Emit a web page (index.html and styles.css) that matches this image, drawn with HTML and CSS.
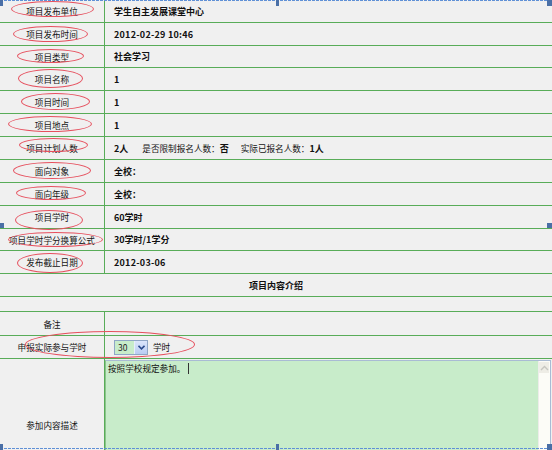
FILE: index.html
```html
<!DOCTYPE html>
<html lang="zh">
<head>
<meta charset="utf-8">
<link rel="stylesheet" href="styles.css">
</head>
<body>
<div class="page">
  <div class="sheet">
    <div class="row h23"><div class="label">项目发布单位</div><div class="value">学生自主发展课堂中心</div></div>
    <div class="row h23"><div class="label">项目发布时间</div><div class="value"><span class="num">2012-02-29 10:46</span></div></div>
    <div class="row h22"><div class="label">项目类型</div><div class="value">社会学习</div></div>
    <div class="row h23"><div class="label">项目名称</div><div class="value">1</div></div>
    <div class="row h23"><div class="label">项目时间</div><div class="value">1</div></div>
    <div class="row h23"><div class="label">项目地点</div><div class="value">1</div></div>
    <div class="row h23"><div class="label">项目计划人数</div><div class="value"><span>2人</span><span class="plain g1">是否限制报名人数：</span><span>否</span><span class="plain g2">实际已报名人数：</span><span>1人</span></div></div>
    <div class="row h23"><div class="label">面向对象</div><div class="value">全校：</div></div>
    <div class="row h23"><div class="label">面向年级</div><div class="value">全校：</div></div>
    <div class="row h23"><div class="label">项目学时</div><div class="value">60学时</div></div>
    <div class="row h22"><div class="label">项目学时学分换算公式</div><div class="value">30学时/1学分</div></div>
    <div class="row h23"><div class="label">发布截止日期</div><div class="value"><span class="num">2012-03-06</span></div></div>
    <div class="row full h23"><div class="title">项目内容介绍</div></div>
    <div class="row full h15"></div>
    <div class="row h24"><div class="label">备注</div><div class="value"></div></div>
    <div class="row h23"><div class="label">申报实际参与学时</div>
      <div class="value plain">
        <div class="select"><div class="sel-text">30</div><div class="sel-btn"><svg width="7" height="5" viewBox="0 0 7 5"><path d="M0.5 0.8 L3.5 3.8 L6.5 0.8" fill="none" stroke="#2b4b8c" stroke-width="1.6"/></svg></div></div>
        <span class="unit">学时</span>
      </div>
    </div>
    <div class="row desc"><div class="label">参加内容描述</div>
      <div class="value plain top">
        <div class="textarea">
          <div class="ta-text">按照学校规定参加。<span class="caret"></span></div>
          <div class="scroll"><div class="scroll-btn"><svg width="9" height="6" viewBox="0 0 9 6"><path d="M1 5 L4.5 1.5 L8 5" fill="none" stroke="#c6c6c0" stroke-width="1.4"/></svg></div></div>
        </div>
      </div>
    </div>
  </div>

  <div class="ring" style="left:11px;top:1px;width:83px;height:16px"></div>
  <div class="ring" style="left:13px;top:26px;width:75px;height:16px"></div>
  <div class="ring" style="left:17px;top:49px;width:67px;height:14px"></div>
  <div class="ring" style="left:18px;top:69px;width:65px;height:19px"></div>
  <div class="ring" style="left:21px;top:93px;width:69px;height:17px"></div>
  <div class="ring" style="left:8px;top:116px;width:84px;height:16px"></div>
  <div class="ring" style="left:19px;top:138px;width:69px;height:14px"></div>
  <div class="ring" style="left:13px;top:162px;width:78px;height:17px"></div>
  <div class="ring" style="left:16px;top:186px;width:70px;height:14px"></div>
  <div class="ring" style="left:15px;top:210px;width:68px;height:20px"></div>
  <div class="ring" style="left:8px;top:232px;width:95px;height:15px"></div>
  <div class="ring" style="left:17px;top:253px;width:66px;height:20px"></div>
  <div class="ring" style="left:25px;top:331px;width:170px;height:27px"></div>

  <div class="dash dash-top"></div>
  <div class="dash dash-bottom"></div>
  <div class="handle h-tl"></div>
  <div class="handle h-tc"></div>
  <div class="handle h-tr"></div>
  <div class="handle h-ml"></div>
  <div class="handle h-mr"></div>
  <div class="handle h-bl"></div>
  <div class="handle h-bc"></div>
  <div class="handle h-br"></div>
</div>
</body>
</html>
```

FILE: styles.css
```css
html, body {
  margin: 0;
  padding: 0;
  overflow: hidden;
  background: #f0f0f0;
}
.page {
  position: relative;
  width: 552px;
  height: 450px;
  overflow: hidden;
  background: #f0f0f0;
  font-family: "Noto Sans CJK SC", "Noto Sans", sans-serif;
  color: #111;
}
.sheet {
  display: flex;
  flex-direction: column;
}
.row {
  display: grid;
  grid-template-columns: 105px 1fr;
  box-sizing: border-box;
  border-bottom: 1px solid #58ac58;
}
.row.full { grid-template-columns: 1fr; }
.h15 { height: 15px; }
.h22 { height: 22px; }
.h23 { height: 23px; }
.h24 { height: 24px; }
.label {
  box-sizing: border-box;
  border-right: 1px solid #58ac58;
  display: flex;
  align-items: center;
  justify-content: center;
  font-size: 8.6px;
  color: #151515;
  white-space: nowrap;
}
.value {
  display: flex;
  align-items: center;
  padding-left: 9px;
  font-size: 9px;
  font-weight: bold;
  white-space: nowrap;
}
.num {
  letter-spacing: 0.25px;
}
.value.top { align-items: stretch; padding-left: 0; }
.plain { font-weight: normal; }
.value .plain { font-size: 8.6px; color: #151515; }
.g1 { margin-left: 14px; }
.g2 { margin-left: 12px; }
.title {
  display: flex;
  align-items: center;
  justify-content: center;
  font-size: 9px;
  font-weight: bold;
}
.select {
  display: flex;
  width: 34px;
  height: 15px;
  box-sizing: border-box;
  border: 1px solid #8fa6c6;
  background: #fff;
}
.sel-text {
  flex: 1;
  background: #c8ecca;
  font-size: 8.5px;
  line-height: 13px;
  padding-left: 3px;
  color: #222;
}
.sel-btn {
  width: 12px;
  display: flex;
  align-items: center;
  justify-content: center;
  background: linear-gradient(#dbe5fb, #b9ccf3);
  border-left: 1px solid #e8eefc;
}
.unit {
  margin-left: 5px;
  font-size: 8.6px;
}
.desc {
  height: 131px;
  border-bottom: none;
}
.textarea {
  display: flex;
  width: 446px;
  margin-top: 1px;
  box-sizing: border-box;
  border: 1px solid #a9bbd4;
  border-left-color: #8cc48c;
  background: #c8ecca;
}
.ta-text {
  flex: 1;
  padding: 1px 2px;
  font-size: 8.6px;
  line-height: 12px;
  color: #111;
}
.caret {
  display: inline-block;
  width: 1px;
  height: 11px;
  margin-left: 3px;
  background: #333;
  vertical-align: -2px;
}
.scroll {
  width: 11px;
  background: #fcfcf7;
  border-left: 1px solid #ececea;
  padding-top: 1px;
}
.scroll-btn {
  width: 10px;
  height: 11px;
  display: flex;
  align-items: center;
  justify-content: center;
  background: #eeede6;
}
.ring {
  position: absolute;
  box-sizing: border-box;
  border: 1px solid #e6505e;
  border-radius: 50%;
}
.dash {
  position: absolute;
  left: 0;
  width: 552px;
  height: 1px;
  background: repeating-linear-gradient(to right, #5f90d6 0 3px, transparent 3px 4px);
}
.dash-top { top: 0; }
.dash-bottom { top: 448px; }
.handle {
  position: absolute;
  background: #4a6fa6;
}
.h-tl { left: 0; top: 0; width: 3px; height: 6px; }
.h-tc { left: 276px; top: 0; width: 3px; height: 6px; }
.h-tr { left: 547px; top: 0; width: 5px; height: 6px; }
.h-ml { left: 0; top: 223px; width: 4px; height: 5px; }
.h-mr { left: 547px; top: 223px; width: 5px; height: 5px; }
.h-bl { left: 0; top: 444px; width: 3px; height: 6px; }
.h-bc { left: 276px; top: 444px; width: 3px; height: 6px; }
.h-br { left: 547px; top: 444px; width: 5px; height: 6px; }
```
